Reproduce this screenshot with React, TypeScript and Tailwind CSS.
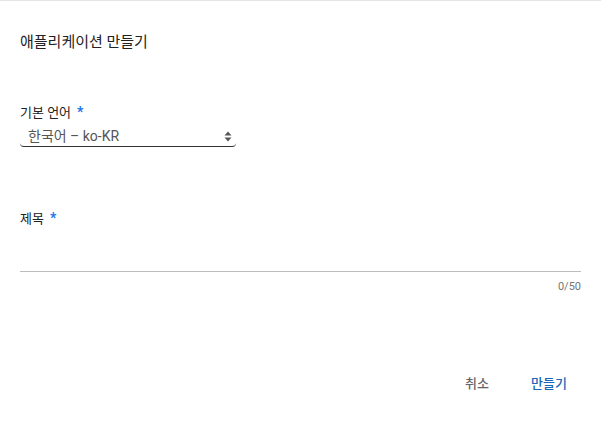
import React from 'react';

const font = { fontFamily: "Roboto, 'Noto Sans CJK KR', sans-serif" };

const Required = () => <span className="ml-[6px] text-[14px] font-bold text-[#1a73e8] relative -top-[1px]">*</span>;

export default function App() {
  return (
    <div className="w-[601px] h-[423px] bg-white border-t border-[#e6e6e6]" style={font}>
      <div className="px-5">
        <h2 className="pt-[31px] text-[15px] leading-[20px] text-[#222] font-normal">애플리케이션 만들기</h2>

        <label className="flex items-center mt-[52px] text-[13px] leading-[18px] text-[#222]">
          기본 언어
          <Required />
        </label>
        <div className="mt-[5px] w-[216px] h-5 flex items-center justify-between pl-2 pr-[4px] border-b border-[#333] rounded-[4px] border-x-0 border-t-0">
          <span className="text-[14px] text-[#555]">한국어 – ko-KR</span>
          <svg width="8" height="11" viewBox="0 0 8 11" className="text-[#555]">
            <path d="M4 0.5 L7.5 4.5 H0.5 Z" fill="currentColor" />
            <path d="M4 10.5 L7.5 6.5 H0.5 Z" fill="currentColor" />
          </svg>
        </div>

        <label className="flex items-center mt-[63px] text-[13px] leading-[18px] text-[#222]">
          제목
          <Required />
        </label>
        <div className="mt-[43px] border-b border-[#bdbdbd]" />
        <div className="mt-[7px] text-right text-[11px] leading-[16px] text-[#757575]">0/50</div>

        <div className="mt-[71px] flex justify-end gap-2">
          <button className="min-w-[64px] h-9 px-2 text-[13px] font-medium text-[#666]">취소</button>
          <button className="min-w-[64px] h-9 px-2 text-[13px] font-medium text-[#1a66b8]">만들기</button>
        </div>
      </div>
    </div>
  );
}
